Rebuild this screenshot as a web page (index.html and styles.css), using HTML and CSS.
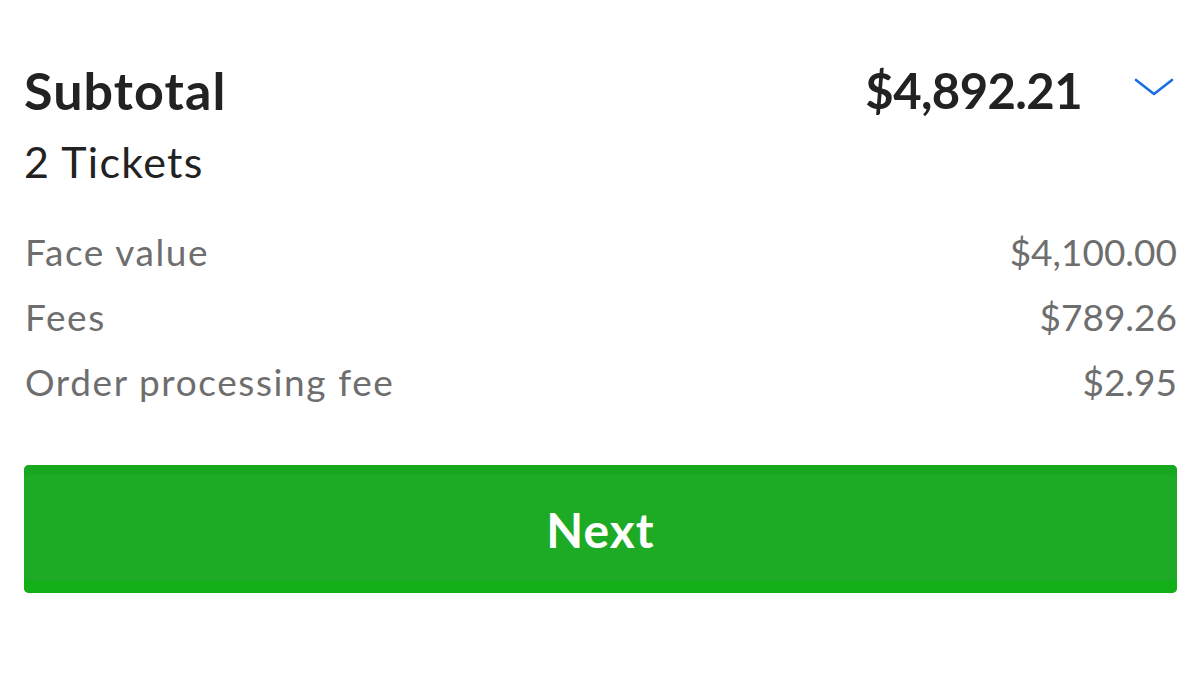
FILE: index.html
```html
<!DOCTYPE html>
<html>
<head>
<meta charset="utf-8">
<link rel="stylesheet" href="styles.css">
</head>
<body>
<div class="page">
  <div class="head-row">
    <div class="title">Subtotal</div>
    <div class="total">
      <span class="amount">$4,892.21</span>
      <svg class="chev" width="40" height="20" viewBox="0 0 40 20"><path d="M2 3 L20 17 L38 3" fill="none" stroke="#1a6fe0" stroke-width="2.6" stroke-linecap="round" stroke-linejoin="round"/></svg>
    </div>
  </div>
  <div class="tickets">2 Tickets</div>
  <div class="lines">
    <div class="line"><span class="label">Face value</span><span>$4,100.00</span></div>
    <div class="line"><span class="label">Fees</span><span>$789.26</span></div>
    <div class="line"><span class="label">Order processing fee</span><span>$2.95</span></div>
  </div>
  <button class="next">Next</button>
</div>
</body>
</html>
```
FILE: styles.css
```css
html, body {
  margin: 0;
  padding: 0;
  background: #ffffff;
}
body {
  font-family: Lato, "Noto Sans", sans-serif;
  color: #222222;
}
.page {
  width: 1200px;
  height: 675px;
  padding: 0 23px 0 24px;
  box-sizing: border-box;
  display: flex;
  flex-direction: column;
}
.head-row {
  display: flex;
  justify-content: space-between;
  align-items: center;
  margin-top: 58px;
  height: 64px;
}
.title {
  font-size: 52px;
  font-weight: 700;
  letter-spacing: 1.1px;
}
.total {
  display: flex;
  align-items: center;
}
.amount {
  font-size: 49px;
  font-weight: 700;
  letter-spacing: -0.6px;
}
.chev {
  margin-left: 52px;
  margin-right: 3px;
  margin-top: -6px;
}
.tickets {
  font-size: 43px;
  letter-spacing: 1.3px;
  margin-top: 12px;
  height: 56px;
  line-height: 56px;
}
.lines {
  margin-top: 29px;
  display: flex;
  flex-direction: column;
  color: #6e6e6e;
  font-size: 37px;
}
.line {
  display: flex;
  justify-content: space-between;
  height: 65px;
  line-height: 65px;
  padding-left: 1px;
}
.label {
  letter-spacing: 1.6px;
}
.next {
  margin-top: 51px;
  height: 128px;
  width: 100%;
  border: none;
  border-radius: 5px;
  background: #1daa24;
  box-shadow: inset 0 -12px 0 #12b016, inset 0 10px 0 #18a81f;
  color: #ffffff;
  font-family: Lato, "Noto Sans", sans-serif;
  font-size: 48px;
  font-weight: 700;
  letter-spacing: 1px;
  padding: 0;
}
```
